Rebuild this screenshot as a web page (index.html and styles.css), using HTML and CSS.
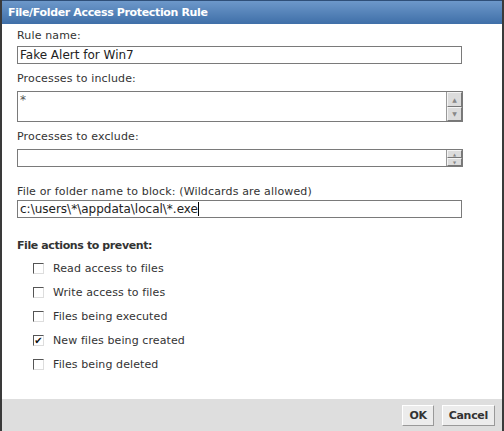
FILE: index.html
```html
<!DOCTYPE html>
<html>
<head>
	<title>File/Folder Access Protection Rule</title>
	<link rel="stylesheet" href="styles.css">
</head>
<body>
	<div class="dialog">
		<div class="titlebar">File/Folder Access Protection Rule</div>

		<div class="content">
			<div class="label">Rule name:</div>
			<div class="field">Fake Alert for Win7</div>

			<div class="label gap">Processes to include:</div>
			<div class="box tall">
				<div class="box-text">*</div>
				<div class="spin">
					<div class="spin-btn">&#9650;</div>
					<div class="spin-btn">&#9660;</div>
				</div>
			</div>

			<div class="label gap">Processes to exclude:</div>
			<div class="box short">
				<div class="box-text"></div>
				<div class="spin">
					<div class="spin-btn">&#9650;</div>
					<div class="spin-btn">&#9660;</div>
				</div>
			</div>

			<div class="label gap2">File or folder name to block: (Wildcards are allowed)</div>
			<div class="field path">c:\users\*\appdata\local\*.exe<span class="caret"></span></div>

			<div class="section">File actions to prevent:</div>
			<div class="checks">
				<div class="check"><span class="cb"></span>Read access to files</div>
				<div class="check"><span class="cb"></span>Write access to files</div>
				<div class="check"><span class="cb"></span>Files being executed</div>
				<div class="check"><span class="cb on">&#10004;</span>New files being created</div>
				<div class="check"><span class="cb"></span>Files being deleted</div>
			</div>
		</div>

		<div class="footer">
			<div class="btn">OK</div>
			<div class="btn">Cancel</div>
		</div>
	</div>
</body>
</html>
```

FILE: styles.css
```css
body {
	margin: 0;
	font-family: "DejaVu Sans", Verdana, sans-serif;
	font-size: 11px;
	color: #333;
	background: #fff;
}
.dialog {
	width: 504px;
	height: 431px;
	box-sizing: border-box;
	border-left: 2px solid #3a3a3a;
	border-right: 2px solid #3a3a3a;
	display: flex;
	flex-direction: column;
}
.titlebar {
	height: 24px;
	line-height: 23px;
	padding-left: 6px;
	color: #fff;
	font-weight: bold;
	font-size: 11px;
	letter-spacing: -0.35px;
	background: linear-gradient(#6d98ca, #3f6fa8);
	border-top: 1px solid #2f4f78;
	box-sizing: border-box;
}
.content {
	flex: 1;
	padding: 4px 0 0 15px;
}
.label {
	height: 16px;
	line-height: 16px;
	margin-bottom: 2px;
	letter-spacing: 0.15px;
}
.gap {
	margin-top: 7px;
	margin-bottom: 4px;
}
.gap2 {
	margin-top: 17px;
	margin-bottom: 0;
}
.field {
	width: 445px;
	height: 18px;
	box-sizing: border-box;
	border: 1px solid #7a7a7a;
	padding-left: 2px;
	line-height: 16px;
	font-size: 12px;
	color: #222;
}
.caret {
	display: inline-block;
	width: 1px;
	height: 14px;
	background: #000;
	vertical-align: -3px;
}
.box {
	width: 446px;
	box-sizing: border-box;
	border: 1px solid #7a7a7a;
	display: flex;
}
.box.tall {
	height: 31px;
}
.box.short {
	height: 18px;
}
.box-text {
	flex: 1;
	padding: 2px 2px;
	font-size: 12px;
	line-height: 12px;
	color: #555;
}
.spin {
	width: 15px;
	display: flex;
	flex-direction: column;
	border-left: 1px solid #999;
}
.spin-btn {
	flex: 1;
	background: #dcdcdc;
	border: 1px solid #f4f4f4;
	border-right-color: #777;
	border-bottom-color: #777;
	font-size: 6px;
	color: #888;
	display: flex;
	align-items: center;
	justify-content: center;
}
.short .spin-btn {
	font-size: 4px;
}
.section {
	margin-top: 20px;
	height: 16px;
	line-height: 16px;
	font-weight: bold;
	letter-spacing: -0.4px;
}
.checks {
	padding: 2px 0 0 16px;
}
.check {
	height: 24px;
	display: flex;
	align-items: center;
	letter-spacing: 0.1px;
}
.cb {
	width: 11px;
	height: 11px;
	box-sizing: border-box;
	border: 1px solid #555;
	border-right-color: #ddd;
	border-bottom-color: #ddd;
	margin-right: 9px;
	font-size: 10px;
	line-height: 10px;
	text-align: center;
	color: #111;
}
.footer {
	height: 32px;
	background: #dedede;
	display: flex;
	justify-content: flex-end;
	align-items: center;
	padding-right: 7px;
	gap: 8px;
}
.btn {
	height: 21px;
	line-height: 19px;
	box-sizing: border-box;
	padding: 0 6px;
	background: #ececec;
	border: 1px solid #fff;
	border-right-color: #999;
	border-bottom-color: #999;
	font-weight: bold;
	color: #333;
	letter-spacing: -0.3px;
}
```
